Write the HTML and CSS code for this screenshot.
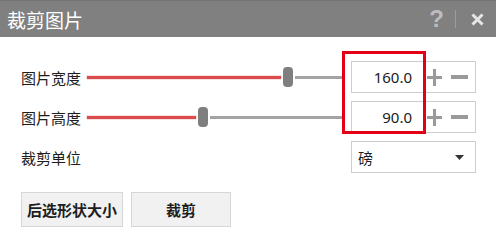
FILE: index.html
```html
<!DOCTYPE html>
<html lang="zh-CN">
<head>
<meta charset="utf-8">
<title>裁剪图片</title>
<link rel="stylesheet" href="styles.css">
</head>
<body>
<div class="dialog">
  <div class="titlebar">
    <span class="title">裁剪图片</span>
    <div class="tools">
      <span class="help">?</span>
      <span class="sep"></span>
      <svg class="close" width="13" height="13" viewBox="0 0 13 13"><path d="M1.5 1.5L11.5 11.5M11.5 1.5L1.5 11.5" stroke="#e6e6e6" stroke-width="3" stroke-linecap="butt"/></svg>
    </div>
  </div>
  <div class="content">
    <div class="row">
      <span class="label">图片宽度</span>
      <div class="slider">
        <span class="track-on" style="width:194px"></span>
        <span class="thumb"></span>
        <span class="track-off"></span>
      </div>
      <div class="spin">
        <span class="val">160.0</span>
        <svg class="plus" width="15" height="17" viewBox="0 0 15 17"><path d="M0 8.5H15M7.5 0V17" stroke="#9a9a9a" stroke-width="3"/></svg>
        <svg class="minus" width="17" height="4" viewBox="0 0 17 4"><rect width="17" height="4" fill="#9a9a9a"/></svg>
      </div>
    </div>
    <div class="row">
      <span class="label">图片高度</span>
      <div class="slider">
        <span class="track-on" style="width:109px"></span>
        <span class="thumb"></span>
        <span class="track-off"></span>
      </div>
      <div class="spin">
        <span class="val">90.0</span>
        <svg class="plus" width="15" height="17" viewBox="0 0 15 17"><path d="M0 8.5H15M7.5 0V17" stroke="#9a9a9a" stroke-width="3"/></svg>
        <svg class="minus" width="17" height="4" viewBox="0 0 17 4"><rect width="17" height="4" fill="#9a9a9a"/></svg>
      </div>
    </div>
    <div class="row">
      <span class="label">裁剪单位</span>
      <div class="select">
        <span class="sel-val">磅</span>
        <svg class="arrow" width="9" height="5" viewBox="0 0 9 5"><path d="M0 0H9L4.5 5Z" fill="#333"/></svg>
      </div>
    </div>
    <div class="buttons">
      <button class="btn btn-wide">后选形状大小</button>
      <button class="btn">裁剪</button>
    </div>
  </div>
  <div class="highlight"></div>
</div>
</body>
</html>
```

FILE: styles.css
```css
html, body {
  margin: 0;
  padding: 0;
  background: #ffffff;
}
body {
  width: 496px;
  height: 249px;
  overflow: hidden;
  font-family: "Noto Sans CJK SC", sans-serif;
  color: #1e1e1e;
}
.dialog {
  position: relative;
  width: 496px;
  height: 249px;
}
.titlebar {
  height: 37px;
  box-sizing: border-box;
  border-top: 1px solid #747474;
  background: #808080;
  display: flex;
  align-items: center;
  padding: 0 12px 0 7px;
}
.title {
  color: #ffffff;
  font-size: 19px;
  line-height: 1;
  flex: 1;
}
.tools {
  display: flex;
  align-items: center;
}
.help {
  font-family: "Liberation Sans", sans-serif;
  font-weight: bold;
  font-size: 24px;
  line-height: 1;
  color: #bdbdbd;
}
.sep {
  width: 1px;
  height: 18px;
  background: #9c9c9c;
  margin: 0 15px 0 11px;
}
.close {
  display: block;
}
.content {
  padding: 24px 20px 0 21px;
  display: flex;
  flex-direction: column;
  gap: 8px;
}
.row {
  display: flex;
  align-items: center;
  height: 32px;
}
.label {
  width: 66px;
  font-size: 15px;
  line-height: 1;
  flex: none;
}
.slider {
  width: 256px;
  height: 20px;
  display: flex;
  align-items: center;
  gap: 2px;
  flex: none;
}
.track-on {
  height: 3px;
  background: #d94b4d;
  box-shadow: 0 0 0 0.5px rgba(217, 75, 77, 0.35);
  flex: none;
}
.thumb {
  width: 10px;
  height: 20px;
  border-radius: 4px;
  background: #7f7f7f;
  flex: none;
}
.track-off {
  height: 3px;
  background: #a3a3a3;
  flex: 1;
}
.spin, .select {
  margin-left: auto;
  width: 125px;
  height: 32px;
  box-sizing: border-box;
  border: 1px solid #cdcdcd;
  display: flex;
  align-items: center;
}
.val {
  width: 60px;
  text-align: right;
  font-family: "Noto Sans", "Noto Sans CJK SC", sans-serif;
  font-size: 15px;
  line-height: 1;
  color: #1a1a1a;
}
.plus {
  margin-left: 15px;
  display: block;
}
.minus {
  margin-left: 9px;
  display: block;
}
.select {
  padding: 0 11px 0 6px;
  justify-content: space-between;
}
.sel-val {
  font-size: 15px;
  line-height: 1;
}
.arrow {
  display: block;
}
.buttons {
  display: flex;
  gap: 8px;
  margin-top: 11px;
}
.btn {
  height: 35px;
  width: 100px;
  margin: 0;
  padding: 0;
  box-sizing: border-box;
  border: 1px solid #d6d6d6;
  background: #f1f1f1;
  font-family: "Noto Sans CJK SC", sans-serif;
  font-weight: bold;
  font-size: 15px;
  color: #1e1e1e;
  line-height: 1;
}
.btn-wide {
  width: 102px;
}
.highlight {
  position: absolute;
  left: 342px;
  top: 51px;
  width: 84px;
  height: 83px;
  box-sizing: border-box;
  border: 3px solid #e30016;
}
```
